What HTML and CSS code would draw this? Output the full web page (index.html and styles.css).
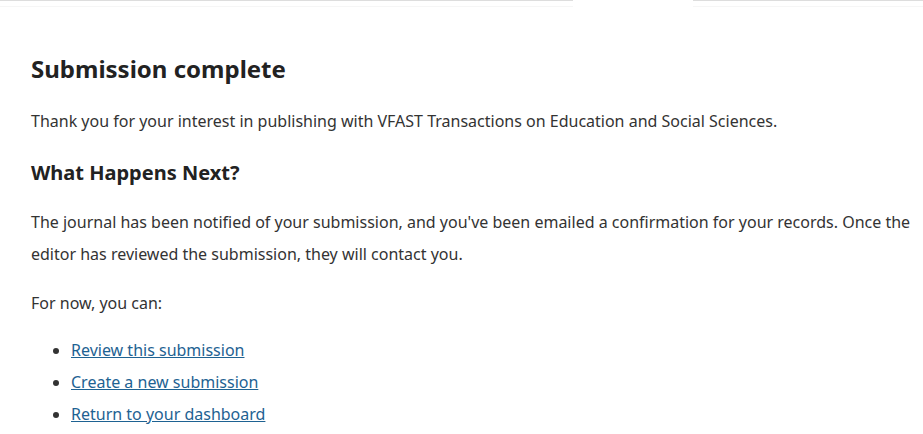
FILE: index.html
```html
<!DOCTYPE html>
<html lang="en">
<head>
<meta charset="utf-8">
<title>Submission complete</title>
<link rel="stylesheet" href="styles.css">
</head>
<body>
<div class="topbar">
  <div class="topbar-line topbar-left"></div>
  <div class="topbar-tab"></div>
  <div class="topbar-line"></div>
</div>
<main class="content">
  <h1 class="title">Submission complete</h1>
  <p class="text intro">Thank you for your interest in publishing with VFAST Transactions on Education and Social Sciences.</p>
  <h2 class="subtitle">What Happens Next?</h2>
  <p class="text">The journal has been notified of your submission, and you've been emailed a confirmation for your records. Once the editor has reviewed the submission, they will contact you.</p>
  <p class="text">For now, you can:</p>
  <ul class="actions">
    <li><a href="#">Review this submission</a></li>
    <li><a href="#">Create a new submission</a></li>
    <li><a href="#">Return to your dashboard</a></li>
  </ul>
</main>
</body>
</html>
```
FILE: styles.css
```css
html, body {
  margin: 0;
  padding: 0;
  background: #fff;
}
body {
  font-family: "Noto Sans", "Open Sans", sans-serif;
  color: #333;
  overflow: hidden;
}
.topbar {
  display: flex;
  height: 8px;
}
.topbar-line {
  flex: 1;
  border-top: 1px solid #ddd;
  border-bottom: 1px solid #f6f6f6;
  height: 5px;
}
.topbar-left {
  flex: 0 0 573px;
}
.topbar-tab {
  width: 120px;
}
.content {
  padding: 0 12px 0 31px;
}
.title {
  font-size: 24px;
  font-weight: 700;
  color: #222;
  margin: 45px 0 0;
  line-height: 32px;
}
.subtitle {
  font-size: 20px;
  font-weight: 700;
  color: #222;
  margin: 20px 0 0;
  line-height: 32px;
}
.text {
  font-size: 16px;
  line-height: 32px;
  margin: 17px 0 0;
}
.text.intro {
  margin-top: 20px;
}
.actions {
  margin: 15px 0 0;
  padding-left: 40px;
  font-size: 16px;
  line-height: 32px;
}
.actions a {
  color: #1e6292;
}
```
